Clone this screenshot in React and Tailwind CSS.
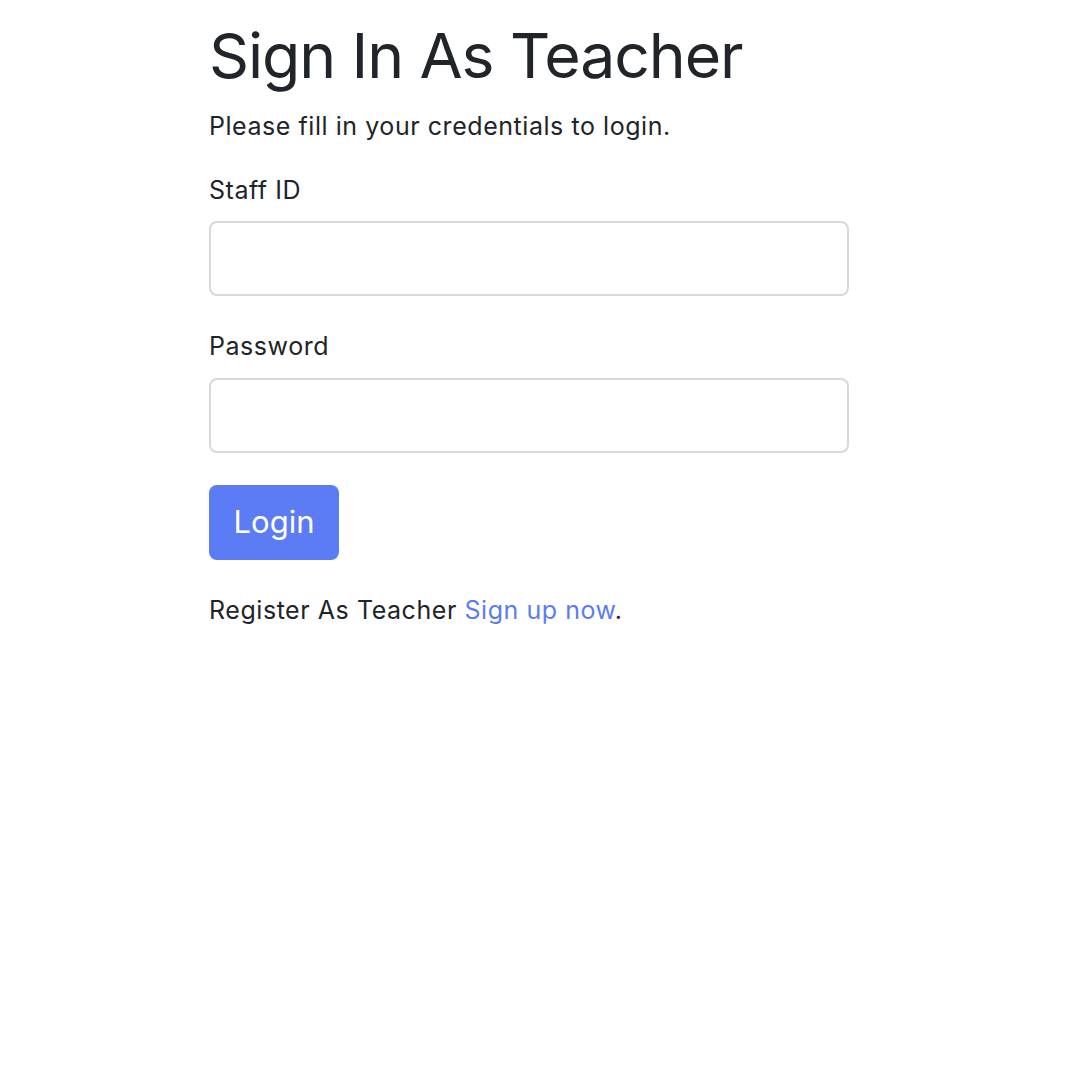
import React from "react";

const font = { fontFamily: "Inter, 'Liberation Sans', sans-serif" };

export default function App() {
  return (
    <div className="min-h-screen bg-white text-[#212529]" style={font}>
      <div className="pl-[209px] pt-[18px]">
        <div className="w-[640px] flex flex-col">
          <h1 className="text-[62.5px] leading-[75px] font-normal tracking-[-1.1px]">
            Sign In As Teacher
          </h1>
          <p className="mt-[15px] text-[25px] leading-[37.5px] tracking-[0.55px]">
            Please fill in your credentials to login.
          </p>

          <form className="flex flex-col" onSubmit={(e) => e.preventDefault()}>
            <label className="mt-[26px] text-[25px] leading-[37.5px] tracking-[0.55px]">
              Staff ID
            </label>
            <input
              type="text"
              className="mt-[12px] h-[75px] w-full rounded-[8px] border-2 border-[#d6d8db] px-[20px] text-[31px] outline-none"
            />

            <label className="mt-[32px] text-[25px] leading-[37.5px] tracking-[0.55px]">
              Password
            </label>
            <input
              type="password"
              className="mt-[12px] h-[75px] w-full rounded-[8px] border-2 border-[#d6d8db] px-[20px] text-[31px] outline-none"
            />

            <div className="mt-[32.5px]">
              <button
                type="submit"
                className="h-[75px] w-[130px] rounded-[8px] bg-[#5c7cf6] text-[31px] text-white"
              >
                Login
              </button>
            </div>
          </form>

          <p className="mt-[31.5px] text-[25px] leading-[37.5px] tracking-[0.55px]">
            Register As Teacher{" "}
            <a href="#" className="text-[#5b7cf5]">
              Sign up now
            </a>
            .
          </p>
        </div>
      </div>
    </div>
  );
}
